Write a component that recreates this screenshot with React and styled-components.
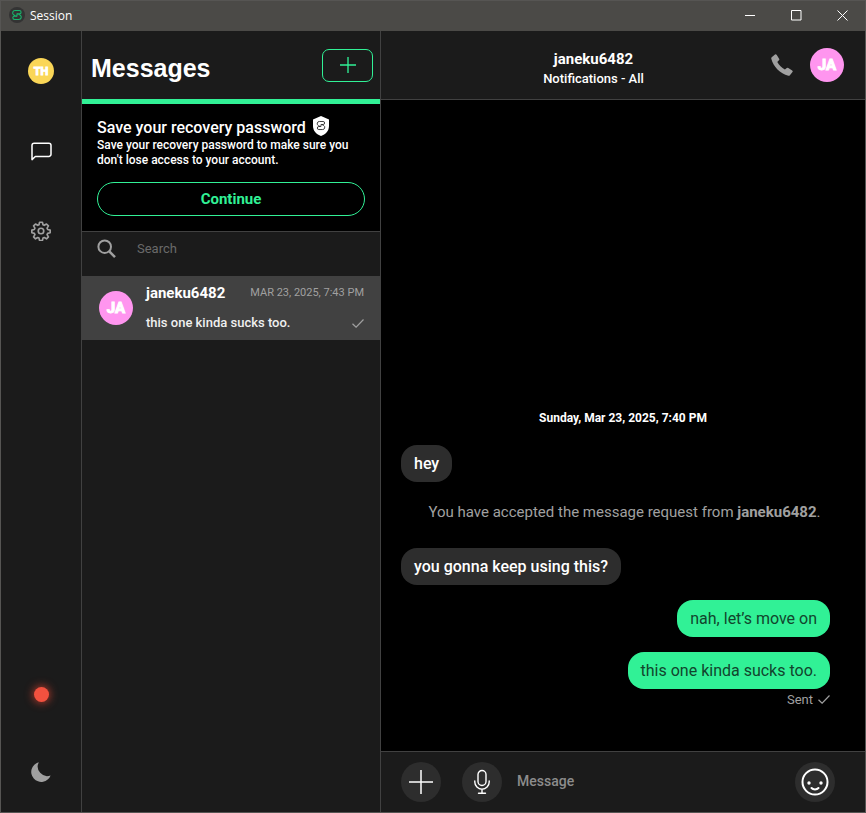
import React from 'react';
import styled, { createGlobalStyle, css } from 'styled-components';

const c = {
  panel: '#1b1b1b',
  line: '#414141',
  green: '#31f196',
  grey: '#a0a0a0',
  bubble: '#2d2d2d',
  pink: '#ff95ef',
};

const GlobalStyle = createGlobalStyle`
  *, *::before, *::after { box-sizing: border-box; }
  body { margin: 0; background: #000; }
  button, input { font: inherit; color: inherit; }
  h1, h2, p { margin: 0; }
`;

const Window = styled.div`
  display: flex;
  flex-direction: column;
  height: 100vh;
  border: 1px solid #565553;
  background: #000;
  color: #fff;
  font-family: Roboto, 'Liberation Sans', sans-serif;
  font-size: 15px;
  overflow: hidden;
`;

const TitleBar = styled.header`
  display: flex;
  align-items: center;
  flex: 0 0 30px;
  padding: 0 0 2px 8px;
  background: #4b4a47;
`;

const AppName = styled.span`
  flex: 1;
  margin-left: 5px;
  font: 12px 'Open Sans', sans-serif;
`;

const PlainButton = styled.button`
  display: flex;
  align-items: center;
  justify-content: center;
  padding: 0;
  border: 0;
  background: transparent;
  cursor: pointer;
`;

const WindowButton = styled(PlainButton)`
  width: 46px;
  height: 28px;
`;

const Body = styled.div`
  display: flex;
  flex: 1;
  min-height: 0;
`;

const Rail = styled.nav`
  display: flex;
  flex-direction: column;
  flex: 0 0 81px;
  background: ${c.panel};
  border-right: 1px solid ${c.line};
`;

const RailButton = styled(PlainButton)`
  height: 80px;
  color: ${(p) => (p.$active ? '#fff' : c.grey)};
  ${(p) => p.$bottom && css`margin-top: auto;`}
`;

const StatusDot = styled.span`
  width: 15px;
  height: 15px;
  margin-top: 4px;
  border-radius: 50%;
  background: #f1513f;
  box-shadow: 0 0 8px 1px #b03a2c;
`;

const Avatar = styled.span`
  display: flex;
  align-items: center;
  justify-content: center;
  flex: none;
  width: ${(p) => p.$size}px;
  height: ${(p) => p.$size}px;
  border-radius: 50%;
  background: ${(p) => p.$color};
  color: #fff;
  font-size: ${(p) => (p.$size > 30 ? 15 : 11)}px;
  font-weight: 700;
  -webkit-text-stroke: 1px #fff;
`;

const Sidebar = styled.aside`
  display: flex;
  flex-direction: column;
  flex: 0 0 299px;
  background: ${c.panel};
  border-right: 1px solid ${c.line};
`;

const SidebarHeader = styled.div`
  display: flex;
  align-items: center;
  justify-content: space-between;
  height: 68px;
  padding: 0 7px 0 9px;
`;

const Heading = styled.h1`
  margin-top: 6px;
  font: bold 25px 'Liberation Sans', sans-serif;
`;

const NewButton = styled(PlainButton)`
  width: 51px;
  height: 33px;
  border: 1px solid ${c.green};
  border-radius: 7px;
  color: ${c.green};
`;

const Banner = styled.section`
  padding: 12px 15px 15px;
  border-top: 5px solid ${c.green};
  border-bottom: 1px solid ${c.line};
  background: #000;
`;

const BannerTitle = styled.h2`
  display: flex;
  align-items: flex-start;
  gap: 7px;
  height: 22px;
  font-size: 16px;
  line-height: 24px;
  font-weight: 500;
`;

const BannerText = styled.p`
  font-size: 12px;
  line-height: 15px;
  font-weight: 500;
`;

const ContinueButton = styled(PlainButton)`
  width: 100%;
  height: 34px;
  margin-top: 14px;
  border: 1px solid ${c.green};
  border-radius: 17px;
  color: ${c.green};
  font-size: 15px;
  font-weight: 700;
`;

const SearchBox = styled.label`
  display: flex;
  align-items: center;
  gap: 20px;
  height: 44px;
  padding: 0 15px 10px;
  color: ${c.grey};
`;

const TextInput = styled.input`
  flex: 1;
  min-width: 0;
  padding: 0 0 2px;
  border: 0;
  outline: 0;
  background: transparent;
  font-size: ${(p) => (p.$strong ? 14 : 13)}px;
  font-weight: ${(p) => (p.$strong ? 500 : 400)};
  &::placeholder { color: ${(p) => (p.$strong ? '#8c8c8c' : '#6a6a6a')}; opacity: 1; }
`;

const ConversationItem = styled.button`
  display: flex;
  align-items: center;
  gap: 13px;
  height: 64px;
  padding: 0 16px 0 17px;
  border: 0;
  background: #414141;
  text-align: left;
  cursor: pointer;
`;

const ItemLines = styled.span`
  display: flex;
  flex-direction: column;
  flex: 1;
  gap: 12px;
`;

const ItemLine = styled.span`
  display: flex;
  align-items: center;
  justify-content: space-between;
  line-height: 18px;
  color: ${c.grey};
`;

const ItemName = styled.strong`
  color: #fff;
  font-size: 15px;
  font-weight: 700;
`;

const ItemDate = styled.time`
  font-size: 11px;
`;

const ItemPreview = styled.span`
  color: #f0f0f0;
  font-size: 13px;
  font-weight: 500;
`;

const Conversation = styled.main`
  display: flex;
  flex-direction: column;
  flex: 1;
  min-width: 0;
`;

const ChatHeader = styled.header`
  display: flex;
  align-items: center;
  height: 69px;
  padding: 0 21px 0 46px;
  background: ${c.panel};
  border-bottom: 1px solid ${c.line};
`;

const ChatTitle = styled.div`
  flex: 1;
  padding-top: 8px;
  text-align: center;
`;

const ChatName = styled.h2`
  font-size: 15px;
  line-height: 20px;
  font-weight: 700;
`;

const ChatSubtitle = styled.p`
  font-size: 13px;
  line-height: 20px;
  font-weight: 500;
`;

const CallButton = styled(PlainButton)`
  width: 44px;
  height: 34px;
  margin-right: 6px;
  color: ${c.grey};
`;

const Messages = styled.div`
  display: flex;
  flex-direction: column;
  flex: 1;
  justify-content: flex-end;
  gap: 15px;
  min-height: 0;
  padding: 0 35px 42px 20px;
`;

const DateBreak = styled.p`
  padding-left: 15px;
  margin-bottom: 5px;
  font-size: 12px;
  line-height: 14px;
  font-weight: 700;
  text-align: center;
`;

const Notice = styled.p`
  padding-left: 18px;
  margin: 5px 0 11px;
  color: ${c.grey};
  font-size: 15px;
  line-height: 20px;
  text-align: center;
`;

const Bubble = styled.p`
  align-self: ${(p) => (p.$mine ? 'flex-end' : 'flex-start')};
  padding: 10px 13px;
  border-radius: 16px;
  background: ${(p) => (p.$mine ? c.green : c.bubble)};
  color: ${(p) => (p.$mine ? '#12452d' : '#fff')};
  font-size: 16px;
  line-height: 17px;
  font-weight: ${(p) => (p.$mine ? 400 : 500)};
`;

const SentStatus = styled.p`
  display: flex;
  align-items: center;
  align-self: flex-end;
  gap: 5px;
  height: 20px;
  margin-top: -15px;
  color: ${c.grey};
  font-size: 13px;
`;

const Composer = styled.form`
  display: flex;
  align-items: center;
  height: 61px;
  padding: 0 30px 0 20px;
  background: ${c.panel};
  border-top: 1px solid ${c.line};
`;

const RoundButton = styled(PlainButton)`
  flex: none;
  width: 40px;
  height: 40px;
  border-radius: 50%;
  background: ${c.bubble};
  color: #fff;
`;

const ComposerActions = styled.div`
  display: flex;
  gap: 21px;
  margin-right: 15px;
`;

const SessionMark = ({ width }) => (
  <g fill="none" stroke="currentColor" strokeWidth={width} strokeLinejoin="round">
    <path d="M18.900 11.900 14.200 9.200H17.500a4.200 4.200 0 0 0 0-8.400H7.500a6 6 0 0 0-3.200 11.300l4.700 2.700H5.700a4.200 4.200 0 0 0 0 8.400h10a6 6 0 0 0 3.200-11.300z" />
    <path d="M14.200 9.200h-2.600v5.600H9" />
  </g>
);

const LogoIcon = () => (
  <svg width="16" height="16" viewBox="0 0 32 32" color="#18b56c" aria-hidden="true">
    <circle cx="16" cy="16" r="16" fill="#333" />
    <g transform="translate(6.400 6.400) scale(.82 .8)"><SessionMark width={2.6} /></g>
  </svg>
);

const ShieldIcon = () => (
  <svg width="16" height="20" viewBox="0 0 16 20" color="#222" aria-hidden="true">
    <path d="M8 0 16 3.500v6.500c0 5-3.500 8.500-8 10-4.500-1.500-8-5-8-10V3.500z" fill="#fff" />
    <g transform="translate(3.800 5.200) scale(.36)"><SessionMark width={2.4} /></g>
  </svg>
);

const PlusIcon = ({ size, width }) => (
  <svg width={size} height={size} viewBox="0 0 24 24" stroke="currentColor" strokeWidth={width} aria-hidden="true">
    <path d="M12 0v24M0 12h24" />
  </svg>
);

const ChatIcon = () => (
  <svg width="21" height="19" viewBox="0 0 22 20" fill="none" stroke="currentColor" strokeWidth="1.600" strokeLinejoin="round" aria-hidden="true">
    <path d="M1 18.500V3.500A2.300 2.300 0 0 1 3.300 1.200h15.400A2.300 2.300 0 0 1 21 3.500v9.400a2.300 2.300 0 0 1-2.300 2.300H4.500z" />
  </svg>
);

const GearIcon = () => (
  <svg width="20" height="20" viewBox="0 0 24 24" fill="none" stroke="currentColor" strokeWidth="2" strokeLinejoin="round" aria-hidden="true">
    <circle cx="12" cy="12" r="3.300" />
    <path d="M10.300 1.500h3.400l.7 3 1.500.7 2.700-1.600 2.300 2.300-1.600 2.700.7 1.600 3 .7v3.200l-3 .7-.7 1.600 1.600 2.700-2.300 2.300-2.700-1.600-1.500.7-.7 3h-3.400l-.7-3-1.500-.7-2.700 1.600-2.300-2.300 1.600-2.700-.7-1.600-3-.7v-3.200l3-.7.700-1.600-1.600-2.700 2.300-2.300 2.700 1.600 1.500-.7z" />
  </svg>
);

const MoonIcon = () => (
  <svg width="20" height="20" viewBox="0 0 20 20" fill="currentColor" aria-hidden="true">
    <path d="M7.800.200A10 10 0 1 0 19.600 13.400 9.500 9.500 0 0 1 7.800.200z" />
  </svg>
);

const SearchIcon = () => (
  <svg width="20" height="20" viewBox="0 0 20 20" fill="none" stroke="currentColor" aria-hidden="true">
    <circle cx="7.700" cy="7.700" r="6.300" strokeWidth="2" />
    <path d="m12.300 12.300 5.700 5.900" strokeWidth="2.500" />
  </svg>
);

const PhoneIcon = () => (
  <svg width="22" height="22" viewBox="0 0 22 22" fill="currentColor" aria-hidden="true">
    <path d="M.7 3.200 4 .4a1.300 1.300 0 0 1 1.600.3l2.500 4.100a1.200 1.200 0 0 1-.2 1.500L6.300 7.900c1.800 3 4.300 5.700 7.600 7.700l1.900-1.600a1.200 1.200 0 0 1 1.500-.1l3.900 2.600a1.200 1.200 0 0 1 .3 1.600l-2.600 3.100c-.4.500-.9.600-1.500.5C9 19.500 2.400 13 .3 4.800c-.2-.6 0-1.200.4-1.600z" />
  </svg>
);

const CheckIcon = () => (
  <svg width="12" height="9" viewBox="0 0 12 9" fill="none" stroke="currentColor" strokeWidth="1.200" aria-hidden="true">
    <path d="m.5 4.700 3.600 3.500L11.500.5" />
  </svg>
);

const MicIcon = () => (
  <svg width="18" height="26" viewBox="0 0 18 26" fill="none" stroke="currentColor" strokeWidth="1.400" strokeLinecap="round" aria-hidden="true">
    <rect x="5" y="1.500" width="8" height="15" rx="4" />
    <path d="M1.800 12v1a7.200 7.200 0 0 0 14.400 0v-1M9 20.300V24M5.500 24.300h7" />
  </svg>
);

const SmileIcon = () => (
  <svg width="28" height="28" viewBox="0 0 28 28" fill="none" stroke="currentColor" strokeWidth="2" strokeLinecap="round" aria-hidden="true">
    <circle cx="14" cy="14" r="12.500" />
    <path d="M10.500 20c1.700 1.900 5.300 1.900 7 0" />
    <g fill="currentColor" stroke="none"><circle cx="8" cy="15" r="1.700" /><circle cx="20" cy="15" r="1.700" /></g>
  </svg>
);

const WindowGlyph = ({ d }) => (
  <svg width="11" height="11" viewBox="0 0 11 11" fill="none" stroke="#fff" aria-hidden="true"><path d={d} /></svg>
);

const windowControls = [
  ['Minimize', 'M0 5.500h10'],
  ['Maximize', 'M.5.500h9.500v9.500H.500z'],
  ['Close', 'M.5.500l10 10M10.500.500l-10 10'],
];

export default function App() {
  return (
    <Window>
      <GlobalStyle />
      <TitleBar>
        <LogoIcon />
        <AppName>Session</AppName>
        {windowControls.map(([label, d]) => (
          <WindowButton key={label} aria-label={label}><WindowGlyph d={d} /></WindowButton>
        ))}
      </TitleBar>
      <Body>
        <Rail>
          <RailButton aria-label="Profile"><Avatar $size={26} $color="#fad657">TH</Avatar></RailButton>
          <RailButton $active aria-label="Messages"><ChatIcon /></RailButton>
          <RailButton aria-label="Settings"><GearIcon /></RailButton>
          <RailButton $bottom aria-label="Network status"><StatusDot /></RailButton>
          <RailButton aria-label="Theme"><MoonIcon /></RailButton>
        </Rail>
        <Sidebar>
          <SidebarHeader>
            <Heading>Messages</Heading>
            <NewButton aria-label="New conversation"><PlusIcon size={16} width={2} /></NewButton>
          </SidebarHeader>
          <Banner>
            <BannerTitle>Save your recovery password <ShieldIcon /></BannerTitle>
            <BannerText>Save your recovery password to make sure you don't lose access to your account.</BannerText>
            <ContinueButton>Continue</ContinueButton>
          </Banner>
          <SearchBox>
            <SearchIcon />
            <TextInput type="text" placeholder="Search" aria-label="Search" />
          </SearchBox>
          <ConversationItem>
            <Avatar $size={34} $color={c.pink}>JA</Avatar>
            <ItemLines>
              <ItemLine>
                <ItemName>janeku6482</ItemName>
                <ItemDate>MAR 23, 2025, 7:43 PM</ItemDate>
              </ItemLine>
              <ItemLine>
                <ItemPreview>this one kinda sucks too.</ItemPreview>
                <CheckIcon />
              </ItemLine>
            </ItemLines>
          </ConversationItem>
        </Sidebar>
        <Conversation>
          <ChatHeader>
            <ChatTitle>
              <ChatName>janeku6482</ChatName>
              <ChatSubtitle>Notifications - All</ChatSubtitle>
            </ChatTitle>
            <CallButton aria-label="Call"><PhoneIcon /></CallButton>
            <Avatar $size={34} $color={c.pink}>JA</Avatar>
          </ChatHeader>
          <Messages>
            <DateBreak>Sunday, Mar 23, 2025, 7:40 PM</DateBreak>
            <Bubble>hey</Bubble>
            <Notice>You have accepted the message request from <strong>janeku6482</strong>.</Notice>
            <Bubble>you gonna keep using this?</Bubble>
            <Bubble $mine>nah, let’s move on</Bubble>
            <Bubble $mine>this one kinda sucks too.</Bubble>
            <SentStatus>Sent <CheckIcon /></SentStatus>
          </Messages>
          <Composer>
            <ComposerActions>
              <RoundButton type="button" aria-label="Add attachment"><PlusIcon size={24} width={1.5} /></RoundButton>
              <RoundButton type="button" aria-label="Record voice message"><MicIcon /></RoundButton>
            </ComposerActions>
            <TextInput $strong type="text" placeholder="Message" aria-label="Message" />
            <RoundButton type="button" aria-label="Emoji"><SmileIcon /></RoundButton>
          </Composer>
        </Conversation>
      </Body>
    </Window>
  );
}
